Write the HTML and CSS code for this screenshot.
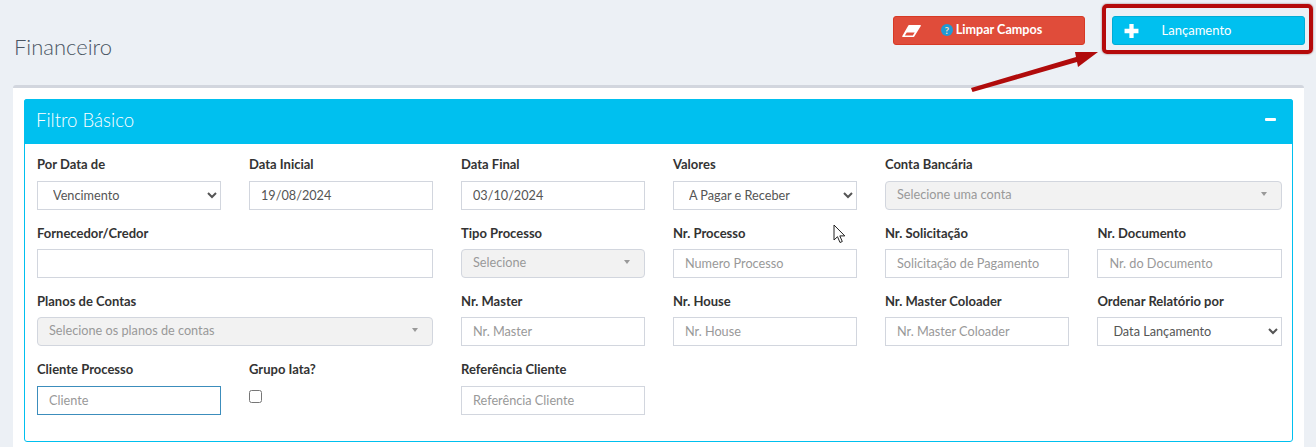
FILE: index.html
```html
<!DOCTYPE html>
<html lang="pt-BR">
<head>
<meta charset="utf-8">
<title>Financeiro</title>
<link rel="stylesheet" href="styles.css">
</head>
<body>
<header class="top">
  <h1 class="title">Financeiro</h1>
  <div class="actions">
    <button class="btn btn-red" type="button">
      <svg class="btn-icon eraser" viewBox="0 0 19 12"><path fill-rule="evenodd" d="M7 0h11.300a.6.6 0 0 1 .5.9L12.300 11.600a.8.8 0 0 1-.7.4H.8a.6.6 0 0 1-.5-.9L6.300.4A.8.8 0 0 1 7 0zM4.800 7.500L2.800 10.500h8l1.900-3z" fill="#fff"/></svg>
      <span class="btn-text"><span class="help">?</span> Limpar Campos</span>
    </button>
    <button class="btn btn-blue" type="button">
      <svg class="btn-icon plus" viewBox="0 0 14 14"><path d="M5 .5h4V5h4.500v4H9v4.500H5V9H.5V5H5z" fill="#fff"/></svg>
      <span class="btn-text">Lançamento</span>
    </button>
  </div>
</header>

<main class="box">
  <section class="panel">
    <div class="panel-head">
      <h2 class="panel-title">Filtro Básico</h2>
      <span class="collapse"></span>
    </div>
    <form class="panel-body">
      <div class="field"><label>Por Data de</label><select class="ctl sel"><option>Vencimento</option></select></div>
      <div class="field"><label>Data Inicial</label><input class="ctl val" value="19/08/2024"></div>
      <div class="field"><label>Data Final</label><input class="ctl val" value="03/10/2024"></div>
      <div class="field"><label>Valores</label><select class="ctl sel"><option>A Pagar e Receber</option></select></div>
      <div class="field span2"><label>Conta Bancária</label><div class="ctl fake"><span>Selecione uma conta</span><i class="caret"></i></div></div>

      <div class="field span2"><label>Fornecedor/Credor</label><input class="ctl"></div>
      <div class="field"><label>Tipo Processo</label><div class="ctl fake"><span>Selecione</span><i class="caret"></i></div></div>
      <div class="field"><label>Nr. Processo</label><input class="ctl" placeholder="Numero Processo"></div>
      <div class="field"><label>Nr. Solicitação</label><input class="ctl" placeholder="Solicitação de Pagamento"></div>
      <div class="field"><label>Nr. Documento</label><input class="ctl" placeholder="Nr. do Documento"></div>

      <div class="field span2"><label>Planos de Contas</label><div class="ctl fake"><span>Selecione os planos de contas</span><i class="caret"></i></div></div>
      <div class="field"><label>Nr. Master</label><input class="ctl" placeholder="Nr. Master"></div>
      <div class="field"><label>Nr. House</label><input class="ctl" placeholder="Nr. House"></div>
      <div class="field"><label>Nr. Master Coloader</label><input class="ctl" placeholder="Nr. Master Coloader"></div>
      <div class="field"><label>Ordenar Relatório por</label><select class="ctl sel"><option>Data Lançamento</option></select></div>

      <div class="field"><label>Cliente Processo</label><input class="ctl focus" placeholder="Cliente"></div>
      <div class="field"><label>Grupo Iata?</label><input class="check" type="checkbox"></div>
      <div class="field"><label>Referência Cliente</label><input class="ctl" placeholder="Referência Cliente"></div>
    </form>
  </section>
</main>

<div class="callout"></div>
<svg class="arrow" viewBox="0 0 140 50"><path d="M1 39 L106 8 L105 3 L128 3 L108 18 L107 13 L2.500 43 Z" fill="#b00b0b"/></svg>
<svg class="cursor" viewBox="0 0 14 20"><path d="M1 1v15l3.500-3.300 2.500 5.800 2.300-1-2.500-5.600h5z" fill="#fff" stroke="#222" stroke-width="1"/></svg>
</body>
</html>
```
FILE: styles.css
```css
* { box-sizing: border-box; }
html, body { margin: 0; height: 447px; overflow: hidden; }
body {
  position: relative;
  background: #ecf0f5;
  font-family: "Lato", "Noto Sans", sans-serif;
  color: #333;
  padding: 16px 12px 0 13px;
}
.top {
  display: flex;
  justify-content: space-between;
  height: 69px;
}
.title {
  margin: 16px 0 0 1px;
  font-size: 22px;
  line-height: 29px;
  font-weight: 300;
  color: #4a5563;
}
.actions { display: flex; gap: 27px; margin-right: -1px; }
.btn {
  display: flex;
  align-items: center;
  width: 193px;
  height: 29px;
  padding: 0;
  border: 1px solid transparent;
  border-radius: 3px;
  color: #fff;
  font: 700 12.600px/16px "Lato", sans-serif;
  position: relative;
}
.btn-red { width: 192px; background: #e04c3a; border-color: #d73925; }
.btn-blue { background: #00c0ef; border-color: #00acd6; font-weight: 400; font-size: 13px; padding-bottom: 2px; }
.btn-icon { position: absolute; top: 50%; transform: translateY(-50%); }
.eraser { left: 8px; width: 19px; height: 12px; }
.plus { left: 11px; width: 15px; height: 15px; }
.btn-text { flex: 1; text-align: center; }
.btn-red .btn-text { padding-left: 5px; padding-bottom: 1px; }
.btn-blue .btn-text { padding-right: 24px; }
.help {
  display: inline-block;
  width: 12px;
  height: 12px;
  border-radius: 50%;
  background: #1e9ad6;
  color: #ffd9b0;
  font-size: 10px;
  line-height: 12px;
  text-align: center;
  vertical-align: 0;
}
.box {
  height: 362px;
  background: #fff;
  border-top: 3px solid #d2d6de;
  border-radius: 3px 3px 0 0;
  padding: 11px 11px 0 11px;
}
.panel {
  height: 343px;
  border: 1px solid #00c0ef;
  border-radius: 3px;
}
.panel-head {
  display: flex;
  justify-content: space-between;
  align-items: center;
  height: 45px;
  margin: -1px -1px 0;
  padding: 0 17px 4px 12px;
  background: #00c0ef;
  border-radius: 3px 3px 0 0;
}
.panel-title {
  margin: 0;
  font-size: 18.600px;
  font-weight: 300;
  color: #fff;
}
.collapse { width: 11px; height: 3px; background: #fff; border-radius: 1px; }
.panel-body {
  display: grid;
  grid-template-columns: 184.100px 184.100px 184.100px 184.100px 184.550px 184.600px;
  grid-template-rows: 68px 68px 69px 68px;
  column-gap: 27.900px;
  padding: 13px 0 0 12px;
}
.field { min-width: 0; }
.field:nth-child(n+6):nth-child(-n+15) label { padding-top: 1px; }
.span2 { grid-column: span 2; }
.field label {
  display: block;
  height: 24px;
  font-size: 13px;
  line-height: 15px;
  font-weight: 700;
  color: #333;
}
.ctl {
  display: block;
  width: 100%;
  height: 29px;
  padding: 0 11px 2px;
  background: #fff;
  border: 1px solid #d2d6de;
  border-radius: 0;
  font: 400 12.700px "Lato", sans-serif;
  color: #555;
  outline: none;
}
.ctl::placeholder { color: #999; opacity: 1; }
.focus { border-color: #3c8dbc; }
.fake {
  display: flex;
  align-items: center;
  justify-content: space-between;
  background: #f2f2f2;
  border-radius: 4px;
  color: #999;
  padding-right: 14px;
  padding-bottom: 3px;
}
.caret {
  width: 0;
  height: 0;
  border-left: 3.500px solid transparent;
  border-right: 3.500px solid transparent;
  border-top: 4px solid #999;
}
.check { display: block; width: 13px; height: 13px; margin: 4px 0 0; }
.callout {
  position: absolute;
  left: 1102px;
  top: 4px;
  width: 211px;
  height: 50px;
  border: 4px solid #b50a0a;
  border-radius: 5px;
  box-shadow: 0 0 2px rgba(90, 0, 0, .6);
}
.arrow { position: absolute; left: 970px; top: 49px; width: 140px; height: 50px; }
.cursor { position: absolute; left: 833px; top: 224px; width: 14px; height: 20px; }
```
